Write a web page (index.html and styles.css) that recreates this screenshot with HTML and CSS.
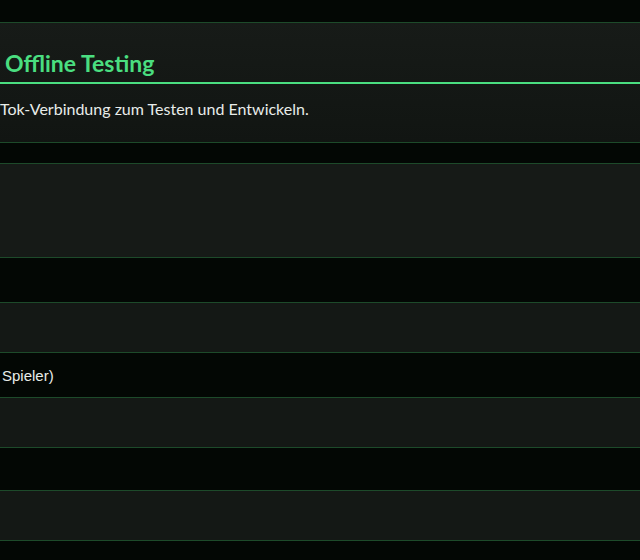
FILE: index.html
```html
<!DOCTYPE html>
<html>
<head>
  <link rel="stylesheet" href="styles.css">
</head>
<body>
  <div class="page">
    <section class="card">
      <div class="card-head">
        <h2>Offline Testing</h2>
      </div>
      <div class="card-body">
        <p>Tok-Verbindung zum Testen und Entwickeln.</p>
      </div>
    </section>

    <form class="test-form">
      <textarea class="field field-area"></textarea>
      <div class="row"></div>
      <input class="field" type="text">
      <label class="row">Spieler)</label>
      <input class="field" type="text">
      <div class="row row-short"></div>
      <input class="field" type="text">
    </form>
  </div>
</body>
</html>
```

FILE: styles.css
```css
html, body {
  margin: 0;
  height: 100%;
}

body {
  background: #030704;
  color: #e8ece9;
  overflow: hidden;
}

.page {
  padding-top: 22px;
}

.card {
  border-top: 1px solid #1d4a2a;
  border-bottom: 1px solid #1d4a2a;
  background: linear-gradient(180deg, #171b18, #111512);
}

.card-head {
  padding: 26px 5px 4px;
  border-bottom: 2px solid #4ade80;
}

.card-head h2 {
  margin: 0;
  font-family: Lato, "Open Sans", sans-serif;
  font-size: 23px;
  font-weight: 700;
  line-height: 29px;
  color: #4ade80;
}

.card-body {
  padding: 12px 0 21px;
}

.card-body p {
  margin: 0;
  font-family: Lato, "Open Sans", sans-serif;
  font-size: 16px;
  line-height: 25px;
}

.test-form {
  display: flex;
  flex-direction: column;
  margin-top: 20px;
}

.field {
  display: block;
  box-sizing: border-box;
  width: 100%;
  height: 51px;
  margin: 0;
  border: 0;
  border-top: 1px solid #1d4a2a;
  border-bottom: 1px solid #1d4a2a;
  background: #141815;
  resize: none;
  outline: none;
}

.field-area {
  height: 95px;
  background: #161a17;
}

.row {
  display: flex;
  align-items: center;
  height: 44px;
  padding-left: 2px;
  font-family: "Liberation Sans", Arial, sans-serif;
  font-size: 15px;
  color: #e8ece9;
}

.row-short {
  height: 42px;
}
```
